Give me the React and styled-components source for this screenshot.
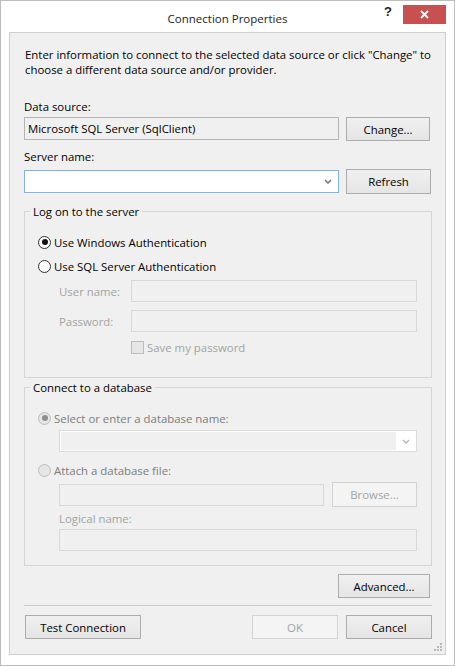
import React from 'react'
import styled, { createGlobalStyle } from 'styled-components'

const GlobalStyle = createGlobalStyle`
  * { box-sizing: border-box; }
  body {
    margin: 0;
    background: #ffffff;
    font-family: "Open Sans", "Noto Sans", sans-serif;
    font-size: 11.4px;
    color: #000;
  }
`

const Window = styled.div`
  width: 455px;
  height: 666px;
  border: 1px solid #bdbdbd;
  background: #ffffff;
  padding: 0 8px 10px 8px;
  display: flex;
  flex-direction: column;
`

const TitleBar = styled.div`
  height: 31px;
  display: grid;
  grid-template-columns: 1fr auto 1fr;
  align-items: start;
`

const Title = styled.div`
  grid-column: 2;
  padding-top: 10px;
  font-size: 11.5px;
  color: #1e1e1e;
`

const Captions = styled.div`
  grid-column: 3;
  display: flex;
  justify-content: flex-end;
  align-items: center;
  gap: 11px;
  padding-top: 4px;
`

const Help = styled.span`
  font-family: "Liberation Sans", sans-serif;
  font-weight: bold;
  font-size: 13px;
  color: #222;
  line-height: 16px;
  margin-top: -6px;
`

const Close = styled.div`
  width: 43px;
  height: 19px;
  background: #c75050;
  display: flex;
  align-items: center;
  justify-content: center;
`

const Client = styled.div`
  flex: 1;
  position: relative;
  border: 1px solid #cfcfcf;
  background: #f0f0f0;
  padding: 14px 13px 0 14px;
  display: flex;
  flex-direction: column;
`

const Text = styled.div`
  line-height: 15px;
  margin-top: ${p => p.$mt || 0}px;
  margin-left: ${p => p.$ml || 0}px;
  color: ${p => (p.$dim ? '#a3a3a3' : '#000')};
`

const Intro = styled(Text)`
  padding-left: 1px;
`

const Row = styled.div`
  display: flex;
  align-items: ${p => p.$align || 'center'};
  gap: ${p => p.$gap ?? 7}px;
  margin-top: ${p => p.$mt || 0}px;
  justify-content: ${p => p.$justify || 'flex-start'};
`

const Field = styled.div`
  height: ${p => p.$h || 22}px;
  width: ${p => (p.$w ? `${p.$w}px` : 'auto')};
  flex: ${p => (p.$w ? 'none' : 1)};
  border: 1px solid ${p => p.$border || '#d9d9d9'};
  background: ${p => p.$bg || '#f0f0f0'};
  display: flex;
  align-items: center;
  padding: 0 3px;
  color: #000;
  line-height: 15px;
`

const Combo = styled(Field)`
  padding: 0;
  justify-content: flex-end;
`

const ComboInner = styled.div`
  flex: 1;
  align-self: stretch;
  margin: 1px 0 1px 1px;
  background: ${p => p.$bg};
`

const Arrow = styled.div`
  width: 20px;
  display: flex;
  align-items: center;
  justify-content: center;
`

const Button = styled.div`
  width: ${p => p.$w}px;
  height: ${p => p.$h || 24}px;
  flex: none;
  border: 1px solid ${p => (p.$off ? '#d3d3d3' : '#acacac')};
  background: ${p => (p.$off ? '#f4f4f4' : 'linear-gradient(#f0f0f0, #e5e5e5)')};
  color: ${p => (p.$off ? '#a3a3a3' : '#000')};
  display: flex;
  align-items: center;
  justify-content: center;
  line-height: 15px;
  margin-right: ${p => p.$mr || 0}px;
  margin-left: ${p => p.$ml || 0}px;
`

const Group = styled.fieldset`
  margin: ${p => p.$mt || 0}px 0 0 0;
  min-inline-size: 0;
  border: 1px solid #d5d5d5;
  padding: 0 14px ${p => p.$pb}px 13px;
`

const Legend = styled.legend`
  padding: 0 3px;
  margin-left: -8px;
  line-height: 15px;
`

const RadioRow = styled.div`
  display: flex;
  align-items: center;
  gap: 3px;
  height: 16px;
  margin-top: ${p => p.$mt || 0}px;
  color: ${p => (p.$off ? '#7d7d7d' : '#000')};
`

const Radio = styled.span`
  width: 13px;
  height: 13px;
  border-radius: 50%;
  border: 1px solid ${p => (p.$off ? '#bcbcbc' : '#333333')};
  background: ${p => (p.$off ? '#e6e6e6' : '#ffffff')};
  display: flex;
  align-items: center;
  justify-content: center;
  flex: none;

  &::after {
    content: '';
    width: 6px;
    height: 6px;
    border-radius: 50%;
    background: ${p => (p.$off ? '#8e8e8e' : '#111')};
    display: ${p => (p.$checked ? 'block' : 'none')};
  }
`

const Credentials = styled.div`
  display: grid;
  grid-template-columns: 72px 1fr;
  row-gap: 8px;
  align-items: center;
  margin: 6px 0 0 21px;
`

const CheckRow = styled.div`
  grid-column: 2;
  display: flex;
  align-items: center;
  gap: 3px;
  color: #a3a3a3;
  height: 14px;
`

const Check = styled.span`
  width: 13px;
  height: 13px;
  border: 1px solid #bcbcbc;
  background: #e6e6e6;
  flex: none;
`

const Indented = styled.div`
  margin-left: 21px;
  display: flex;
  flex-direction: column;
`

const Separator = styled.div`
  height: 1px;
  background: #c9c9c9;
  margin-top: 7px;
`

const Grip = styled.svg`
  position: absolute;
  right: 3px;
  bottom: 3px;
`

const Chevron = ({ color }) => (
  <svg width="8" height="5" viewBox="0 0 8 5">
    <path d="M1 1 L4 4 L7 1" fill="none" stroke={color} strokeWidth="1.3" />
  </svg>
)

export default function App() {
  return (
    <>
      <GlobalStyle />
      <Window>
        <TitleBar>
          <Title>Connection Properties</Title>
          <Captions>
            <Help>?</Help>
            <Close>
              <svg width="9" height="9" viewBox="0 0 9 9">
                <path d="M1 1 L8 8 M8 1 L1 8" stroke="#fff" strokeWidth="1.8" />
              </svg>
            </Close>
          </Captions>
        </TitleBar>

        <Client>
          <Intro>
            Enter information to connect to the selected data source or click "Change" to
            <br />
            choose a different data source and/or provider.
          </Intro>

          <Text $mt={22}>Data source:</Text>
          <Row $mt={3} $align="flex-start">
            <Field $w={315} $h={23} $border="#b4b4b4" $bg="#f0f0f0">Microsoft SQL Server (SqlClient)</Field>
            <Button $w={84} $mr={1}>Change...</Button>
          </Row>

          <Text $mt={8}>Server name:</Text>
          <Row $mt={5}>
            <Combo $w={315} $h={23} $border="#7eb4ea" $bg="#ffffff">
              <Arrow><Chevron color="#6a6a6a" /></Arrow>
            </Combo>
            <Button $w={85} $h={25}>Refresh</Button>
          </Row>

          <Group $mt={10} $pb={23}>
            <Legend>Log on to the server</Legend>
            <RadioRow $mt={15}>
              <Radio $checked />
              Use Windows Authentication
            </RadioRow>
            <RadioRow $mt={8}>
              <Radio />
              Use SQL Server Authentication
            </RadioRow>
            <Credentials>
              <Text $dim>User name:</Text>
              <Field />
              <Text $dim>Password:</Text>
              <Field />
              <CheckRow>
                <Check />
                Save my password
              </CheckRow>
            </Credentials>
          </Group>

          <Group $mt={2} $pb={14}>
            <Legend>Connect to a database</Legend>
            <RadioRow $mt={15} $off>
              <Radio $off $checked />
              Select or enter a database name:
            </RadioRow>
            <Indented>
              <Row $mt={4}>
                <Combo $h={22} $border="#dcdcdc" $bg="#ffffff">
                  <ComboInner $bg="#f0f0f0" />
                  <Arrow><Chevron color="#b4b4b4" /></Arrow>
                </Combo>
              </Row>
            </Indented>
            <RadioRow $mt={10} $off>
              <Radio $off />
              Attach a database file:
            </RadioRow>
            <Indented>
              <Row $mt={4} $gap={8}>
                <Field />
                <Button $w={85} $h={25} $off>Browse...</Button>
              </Row>
              <Text $mt={4} $dim>Logical name:</Text>
              <Row $mt={3}>
                <Field />
              </Row>
            </Indented>
          </Group>

          <Row $mt={8} $justify="flex-end">
            <Button $w={92} $mr={2}>Advanced...</Button>
          </Row>

          <Separator />

          <Row $mt={9} $justify="space-between">
            <Button $w={116} $ml={1}>Test Connection</Button>
            <Row $gap={8}>
              <Button $w={86} $off>OK</Button>
              <Button $w={86}>Cancel</Button>
            </Row>
          </Row>

          <Grip width="8" height="8" viewBox="0 0 8 8">
            <g fill="#b9b9b9">
              <rect x="6" y="0" width="2" height="2" />
              <rect x="3" y="3" width="2" height="2" />
              <rect x="6" y="3" width="2" height="2" />
              <rect x="0" y="6" width="2" height="2" />
              <rect x="3" y="6" width="2" height="2" />
              <rect x="6" y="6" width="2" height="2" />
            </g>
          </Grip>
        </Client>
      </Window>
    </>
  )
}
